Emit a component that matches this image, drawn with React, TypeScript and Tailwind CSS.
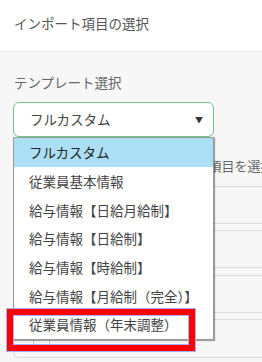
const templates = [
  'フルカスタム',
  '従業員基本情報',
  '給与情報【日給月給制】',
  '給与情報【日給制】',
  '給与情報【時給制】',
  '給与情報【月給制（完全）】',
  '従業員情報（年末調整）',
];

export default function App() {
  const selected = templates[0];

  return (
    <div className="relative h-[362px] w-[262px] overflow-hidden bg-[#f7f7f7] font-['Noto_Sans_CJK_JP','Noto_Sans',sans-serif] text-[13.5px]">
      <div className="h-[52px] border-b border-[#e6e6e6] bg-white px-[14px] pt-[14px] leading-[18px] text-[#555]">
        インポート項目の選択
      </div>

      <div className="pl-[13px] pt-[21px]">
        <p className="pl-px leading-[18px] text-[#666]">テンプレート選択</p>

        <div className="relative z-10 mt-[11px] w-[201px]">
          <div className="flex h-[35px] items-center justify-between rounded-[6px] border-[1.5px] border-[#72c48c] bg-white pl-[16px] pr-[10px] text-[#444]">
            <span>{selected}</span>
            <span className="text-[8px] text-[#333]">▼</span>
          </div>

          <ul className="absolute left-0 top-[35px] w-[201px] border border-[#999] bg-white shadow-[1px_1px_1px_rgba(0,0,0,0.35)]">
            {templates.map((t) => (
              <li
                key={t}
                className={
                  t === selected
                    ? 'flex h-[28.7px] items-center bg-[#aadff5] pl-[15px] text-[#222]'
                    : 'flex h-[28.7px] items-center pl-[15px] text-[#444]'
                }
              >
                {t}
              </li>
            ))}
          </ul>
        </div>

        {/* panel behind the open menu */}
        <div className="rounded-bl-[6px] border-b border-l border-[#dcdcdc] pt-[20px]">
          <p className="whitespace-nowrap text-[13px] leading-[18px] text-[#666]">
            チェックを入れてインポートする項目を選択してください
          </p>
          <div className="mt-[11px] h-[38px] border-y border-[#dcdcdc]" />
          <div className="mt-[6px] h-[38px] border-y border-[#dcdcdc]" />
          <div className="mt-[7px] h-[38px] border-y border-[#dcdcdc]" />
          <div className="mt-[6px] h-[38px] border-t border-[#dcdcdc]">
            <div className="ml-[19px] mt-[20px] flex h-[6px]">
              <div className="w-[17px] border-x border-[#c8c8c8]" />
            </div>
          </div>
        </div>
      </div>

      {/* annotation */}
      <div className="pointer-events-none absolute left-[7px] top-[309px] z-20 h-[42px] w-[188px] border-[6px] border-[#ff0000] shadow-[0_0_0_1px_#a9b0ff,inset_0_0_0_1px_#a9b0ff]" />
    </div>
  );
}
